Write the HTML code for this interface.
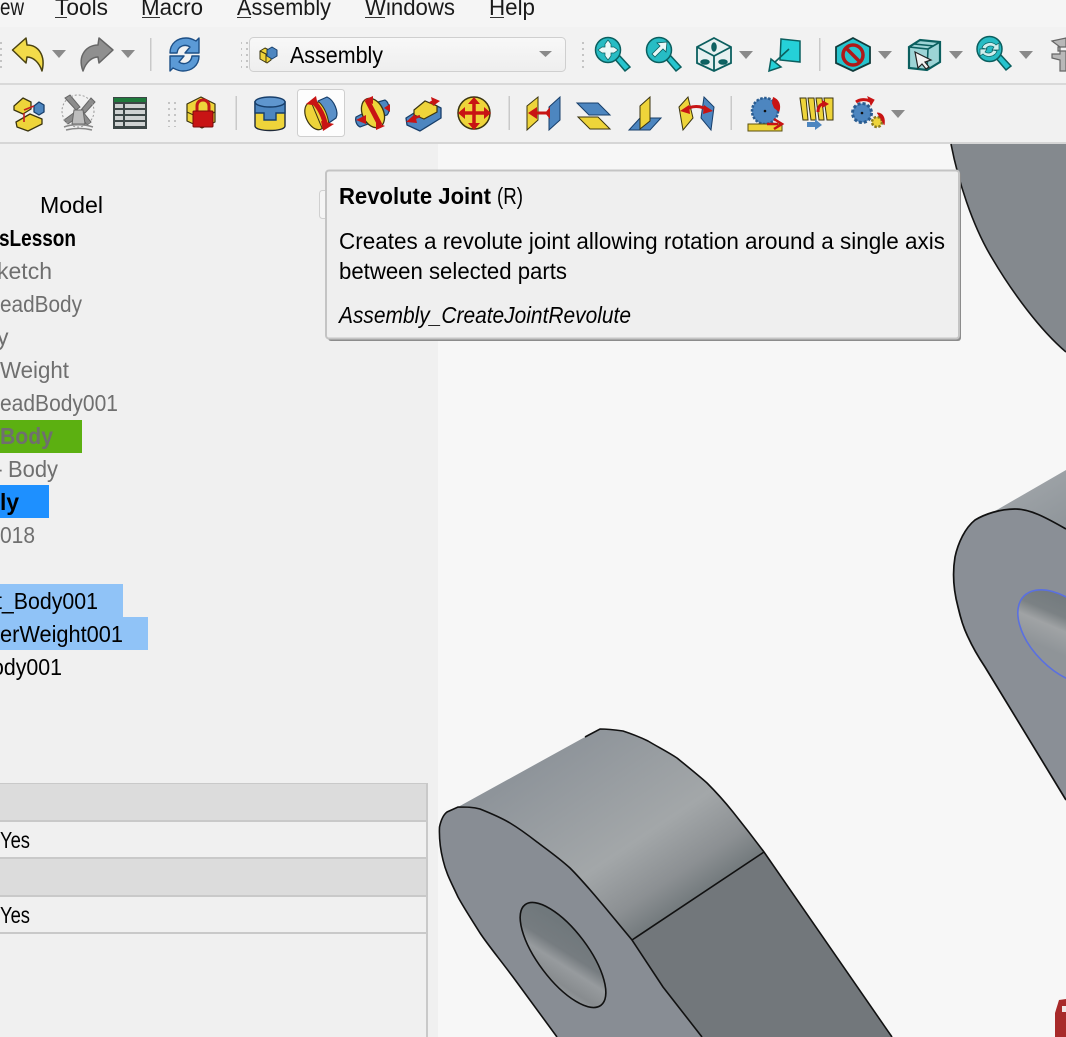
<!DOCTYPE html>
<html><head><meta charset="utf-8"><title>Revolute Joint</title>
<style>
html,body{margin:0;padding:0;width:1066px;height:1037px;overflow:hidden;background:#f0f0f0}
svg{display:block}
text{font-family:"Liberation Sans",sans-serif;font-size:23px;fill:#000}
.m{font-size:23px;fill:#1a1a1a}
.g{fill:#6f6f6f}
.b{font-weight:bold}
</style></head><body>
<svg width="1066" height="1037" viewBox="0 0 1066 1037" xmlns="http://www.w3.org/2000/svg">
<defs>
<linearGradient id="top1" gradientUnits="userSpaceOnUse" x1="587" y1="730" x2="698" y2="896"><stop offset="0" stop-color="#8e949a"/><stop offset=".6" stop-color="#a3a7a9"/><stop offset=".85" stop-color="#8c9093"/><stop offset="1" stop-color="#737a7d"/></linearGradient>
<linearGradient id="hole1" gradientUnits="userSpaceOnUse" x1="542" y1="922" x2="572" y2="1002"><stop offset="0" stop-color="#6d767a"/><stop offset=".4" stop-color="#767c80"/><stop offset=".55" stop-color="#979b9e"/><stop offset=".75" stop-color="#888c8f"/><stop offset="1" stop-color="#a8aeb2"/></linearGradient>
<linearGradient id="top2" gradientUnits="userSpaceOnUse" x1="1020" y1="480" x2="1050" y2="530"><stop offset="0" stop-color="#a0a5a9"/><stop offset="1" stop-color="#90969b"/></linearGradient>
<linearGradient id="hole2" gradientUnits="userSpaceOnUse" x1="1032" y1="600" x2="1056" y2="660"><stop offset="0" stop-color="#6f777b"/><stop offset=".45" stop-color="#7b8184"/><stop offset=".65" stop-color="#a0a3a5"/><stop offset="1" stop-color="#8f9498"/></linearGradient>
<linearGradient id="cb" x1="0" y1="0" x2="0" y2="1"><stop offset="0" stop-color="#f8f8f8"/><stop offset="1" stop-color="#eeeeee"/></linearGradient>
<pattern id="grip" width="6" height="6" patternUnits="userSpaceOnUse"><rect width="2" height="2" fill="#c4c4c4"/></pattern>
</defs>

<!-- chrome -->
<rect width="1066" height="1037" fill="#f0f0f0"/>
<rect x="0" y="0" width="1066" height="27" fill="#f5f5f5"/>
<rect x="0" y="27" width="1066" height="56" fill="#f2f2f2"/>
<rect x="0" y="83" width="1066" height="2" fill="#d9d9d9"/>
<rect x="0" y="85" width="1066" height="57" fill="#f1f1f1"/>
<rect x="0" y="142" width="1066" height="2" fill="#d6d6d6"/>

<!-- viewport -->
<rect x="438" y="144" width="628" height="893" fill="#f7f7f7"/>

<!-- part top right -->
<path d="M951 144 C958 180 972 225 992 258 C1012 292 1040 330 1066 352 L1066 144Z" fill="#84898e"/>
<path d="M951 144 C958 180 972 225 992 258 C1012 292 1040 330 1066 352" fill="none" stroke="#151515" stroke-width="1.600"/>

<!-- part right -->
<path d="M995 511 L1066 470 L1066 530Z" fill="url(#top2)"/>
<path d="M1066 529 L1040 515 L1015 509 L995 511 L975 520 L962 535 L955 557 L953 577 L958 607 L968 637 L985 667 L1066 800 Z" fill="#8a8f96"/>
<path d="M1066 529 C1045 517 1030 509 1015 509 C1000 509 985 514 975 520 C965 528 958 543 955 557 C952 575 954 592 958 607 C961 620 964 629 968 637 C973 648 979 658 985 667 L1066 800" fill="none" stroke="#111" stroke-width="1.700"/>
<ellipse cx="1065" cy="637" rx="58" ry="33" transform="rotate(45 1065 637)" fill="url(#hole2)" stroke="#5a70e0" stroke-width="1.600"/>

<!-- part bottom -->
<path d="M620 930 L764 852 L892 1037 L650 1037 Z" fill="#72777b"/>
<path d="M458 807 L585 737 L600 729 L623 731 L648 741 L677 758 L707 783 L733 812 L764 852 L632 940 L603 905 L570 868 L537 842 L510 823 L480 809Z" fill="url(#top1)"/>
<path d="M439.500 827 C441 820 443 815 447 812 L458 807 C466 807 473 807 480 809 C490 813 500 817 510 823 C520 829 528 835 537 842 C549 851 559 858 570 868 C582 880 592 892 603 905 L632 940 L663 987 L702 1037 L557 1037 L513 977 C498 957 488 945 480 933 C470 917 464 908 458 897 C451 882 446 873 443 860 C440 848 439 838 439.500 827Z" fill="#888d94"/>
<path d="M557 1037 L513 977 C498 957 488 945 480 933 C470 917 464 908 458 897 C451 882 446 873 443 860 C440 848 439 838 439.500 827 C441 820 443 815 447 812 L458 807 C466 807 473 807 480 809 C490 813 500 817 510 823 C520 829 528 835 537 842 C549 851 559 858 570 868 C582 880 592 892 603 905 L632 940 L663 987 L702 1037" fill="none" stroke="#111" stroke-width="1.600"/>
<path d="M585 737 L600 729 C608 729 616 730 623 731 C632 734 640 737 648 741 C658 747 668 752 677 758 C688 767 698 775 707 783 C716 792 725 802 733 812 C745 827 755 840 764 852 L892 1037" fill="none" stroke="#111" stroke-width="1.600"/>
<path d="M764 852 L632 940" fill="none" stroke="#111" stroke-width="1.600"/>
<ellipse cx="563" cy="955" rx="63" ry="25" transform="rotate(53 563 955)" fill="url(#hole1)" stroke="#111" stroke-width="1.600"/>

<!-- red thing -->
<path d="M1055 1013 L1059 1000 L1066 999 L1066 1037 L1055 1037Z" fill="#a82a2a"/>
<rect x="1062" y="1006" width="4" height="6" fill="#f0e8e8"/>

<!-- Menu text -->
<text class="m" x="0" y="15" textLength="24" lengthAdjust="spacingAndGlyphs">ew</text>
<text class="m" x="55" y="15" textLength="53" lengthAdjust="spacingAndGlyphs">Tools</text>
<text class="m" x="141" y="15" textLength="62" lengthAdjust="spacingAndGlyphs">Macro</text>
<text class="m" x="237" y="15" textLength="94" lengthAdjust="spacingAndGlyphs">Assembly</text>
<text class="m" x="365" y="15" textLength="90" lengthAdjust="spacingAndGlyphs">Windows</text>
<text class="m" x="489" y="15" textLength="46" lengthAdjust="spacingAndGlyphs">Help</text>
<g fill="#333"><rect x="55" y="17" width="12" height="1"/><rect x="142" y="17" width="18" height="1"/><rect x="237" y="17" width="14" height="1"/><rect x="365" y="17" width="20" height="1"/><rect x="490" y="17" width="14" height="1"/></g>

<!-- Row 1 -->
<rect x="0" y="42" width="2" height="26" fill="url(#grip)"/>
<path d="M12.500 50 L26 38 L27 45 C38 45 46 55 42 71 C39 62 33 57 27 57 L26 63 Z" fill="#f2db4a" stroke="#4a4210" stroke-width="1.500" stroke-linejoin="round"/>
<polygon points="52,50 66,50 59,58" fill="#8a8a8a"/>
<path d="M113 50 L99 38 L98 45 C87 45 77 55 83 71 C86 62 92 57 98 57 L99 63 Z" fill="#8f8f8f" stroke="#666" stroke-width="1.500" stroke-linejoin="round"/>
<polygon points="121,50 135,50 128,58" fill="#8a8a8a"/>
<rect x="150" y="38" width="1.500" height="33" fill="#c9c9c9"/>
<!-- refresh -->
<path d="M170 53 C170 43 178 38 186 38 C191 38 194 40 196 41 L199 38 L199 53 L185 53 L190 47 C186 44 178 45 177 53Z" fill="#5b9ad6" stroke="#1d4f86" stroke-width="1.400" stroke-linejoin="round"/>
<path d="M199 56 C199 66 191 71 183 71 C178 71 175 69 173 68 L170 71 L170 56 L184 56 L179 62 C183 65 191 64 192 56Z" fill="#5b9ad6" stroke="#1d4f86" stroke-width="1.400" stroke-linejoin="round"/>
<rect x="241" y="42" width="8" height="26" fill="url(#grip)"/>
<!-- combo -->
<rect x="249.500" y="37.500" width="316" height="34" rx="4" fill="url(#cb)" stroke="#cfcfcf"/>
<g transform="translate(259,45)" stroke="#3a3410" stroke-width="1" stroke-linejoin="round">
<path d="M1 6 L6 3 L12 6 L12 15 L8 18 L1 14Z" fill="#eed43a"/><path d="M8 5 L13 2 L18 5 L18 11 L13 14 L8 11Z" fill="#4d86c0" stroke="#173e6a"/><path d="M1 6 L7 9 L7 18" fill="none"/>
</g>
<text x="290" y="63" textLength="93" lengthAdjust="spacingAndGlyphs" fill="#111">Assembly</text>
<polygon points="539,51 552,51 545.500,57" fill="#8a8a8a"/>
<rect x="578" y="42" width="8" height="26" fill="url(#grip)"/>

<!-- zoom fit -->
<g stroke="#0b5f5f" stroke-width="1.500">
<path d="M614 58 L625 71 L630 67 L618 54Z" fill="#27c4ce"/>
<circle cx="608" cy="50" r="12.500" fill="#27bcc4"/>
<path d="M608 40 L611 44 L611 47 L614 47 L618 50 L614 53 L611 53 L611 56 L608 60 L605 56 L605 53 L602 53 L598 50 L602 47 L605 47 L605 44Z" fill="#eaf8f8" stroke="#0b5f5f" stroke-width=".7"/>
<path d="M665 58 L676 71 L681 67 L669 54Z" fill="#27c4ce"/>
<circle cx="659" cy="50" r="12.500" fill="#27bcc4"/>
<path d="M667 42 L666 52 L663 49 L655 57 L652 54 L660 46 L657 43Z" fill="#eaf8f8" stroke-width=".8"/>
<!-- cube -->
<path d="M714 38 L731 47 L731 63 L714 71 L697 63 L697 47Z" fill="#e7f1f1" stroke-width="1.800"/>
<path d="M697 47 L714 56 L731 47 M714 56 L714 71" fill="none" stroke-width="1.800"/>
<ellipse cx="714" cy="47" rx="2" ry="4" fill="#0f6464"/><ellipse cx="705" cy="62" rx="4" ry="2" fill="#0f6464"/><ellipse cx="723" cy="62" rx="4" ry="2" fill="#0f6464"/>
<!-- kite -->
<path d="M781 39 L800 41 L800 62 L780 60Z" fill="#25d0d8"/>
<path d="M789 49 L775 62" fill="none" stroke-width="1.600"/>
<path d="M769 71 L771 59 L781 67Z" fill="#25d0d8"/>
<!-- no draw -->
<path d="M853 38 L870 47 L870 63 L853 71 L836 63 L836 47Z" fill="#27c4ce" stroke="#123c3c" stroke-width="1.800"/>
<circle cx="853" cy="55" r="10" fill="#27c4ce" stroke="#b01818" stroke-width="3.500"/>
<path d="M846 48 L860 62" stroke="#b01818" stroke-width="3.500"/>
<!-- sel cube -->
<path d="M909 47 L920 40 L940 42 L940 62 L927 70 L909 68Z" fill="#9dd4d6" stroke-width="2.200"/>
<path d="M909 47 L928 49 L940 42 M928 49 L927 70 M914 44 L934 46" fill="none" stroke-width="1.600"/>
<path d="M915 52 L931 60 L925 62 L929 67 L926 69 L922 64 L918 68Z" fill="#f1f1f1" stroke="#222" stroke-width="1.200"/>
<!-- zoom refresh -->
<path d="M995 57 L1006 70 L1011 66 L999 53Z" fill="#27c4ce"/>
<circle cx="989.500" cy="49" r="12.500" fill="#27bcc4"/>
<path d="M982 48 C984 42 992 41 996 45 L999 43 L999 50 L992 50 L994 47 C991 45 987 46 986 49Z" fill="#cfeeee" stroke-width=".7"/>
<path d="M997 51 C995 57 987 58 983 54 L980 56 L980 49 L987 49 L985 52 C988 54 992 53 993 50Z" fill="#cfeeee" stroke-width=".7"/>
</g>
<polygon points="739,51 753,51 746,59" fill="#8a8a8a"/>
<rect x="819" y="38" width="1.500" height="33" fill="#c9c9c9"/>
<polygon points="878,51 892,51 885,59" fill="#8a8a8a"/>
<polygon points="949,51 963,51 956,59" fill="#8a8a8a"/>
<polygon points="1019,51 1033,51 1026,59" fill="#8a8a8a"/>
<!-- caliper -->
<path d="M1052 41 L1066 38 L1066 47 L1058 47 L1058 51 L1066 51 L1066 71 L1060 71 L1060 60 L1052 58 L1052 54 L1060 54 L1060 47 Z" fill="#b8b8b8" stroke="#666" stroke-width="1.200"/>

<!-- Row 2 -->
<rect x="297.500" y="89.500" width="47" height="47" rx="3" fill="#fdfdfd" stroke="#cfcfcf"/>
<g stroke="#3a3410" stroke-width="1.300" stroke-linejoin="round">
<path d="M14 106 L23 98 L31 102 L31 109 L23 114 L14 110Z" fill="#eed43a"/>
<path d="M16 122 L30 114 L42 119 L42 124 L28 131 L17 127Z" fill="#eed43a"/>
<path d="M34 106 L39 102 L44 105 L44 112 L39 115 L34 112Z" fill="#4d86c0" stroke="#173e6a"/>
</g>
<path d="M24 110 L34 106 M24 113 L24 122" stroke="#c42020" stroke-width="1.600" fill="none"/>
<!-- windmill -->
<g stroke="#666" fill="#8c8c8c" stroke-width="1">
<path d="M76 110 L65 98 L70 95 L80 107Z"/><path d="M81 110 L91 98 L95 102 L85 113Z"/><path d="M75 112 L64 120 L68 124 L79 116Z"/><path d="M83 112 L91 122 L87 125 L80 115Z"/>
<path d="M74 110 L83 110 L85 124 L72 124Z" fill="#bdbdbd"/>
</g>
<circle cx="78" cy="111" r="16" fill="none" stroke="#999" stroke-width="1" stroke-dasharray="2 2"/>
<path d="M64 127 C72 124 84 124 93 127 M66 130 C74 128 84 128 92 130" fill="none" stroke="#888" stroke-width="1.500"/>
<!-- sheet -->
<rect x="113" y="97" width="34" height="32" fill="#3c4646"/>
<rect x="114" y="98" width="32" height="4" fill="#1f7a3c"/>
<g fill="#cfd2d2"><rect x="115" y="104" width="8" height="4"/><rect x="125" y="104" width="20" height="4"/><rect x="115" y="110" width="8" height="4"/><rect x="125" y="110" width="20" height="4"/><rect x="115" y="116" width="8" height="4"/><rect x="125" y="116" width="20" height="4"/><rect x="115" y="122" width="8" height="4"/><rect x="125" y="122" width="20" height="4"/></g>
<rect x="168" y="101" width="8" height="26" fill="url(#grip)"/>
<!-- lock -->
<path d="M187 104 L201 97 L215 104 L215 122 L202 128 L187 121Z" fill="#eed43a" stroke="#3a3410" stroke-width="1.200" stroke-linejoin="round"/>
<path d="M187 112 L202 119 L215 112" fill="none" stroke="#3a3410" stroke-width="1"/>
<path d="M197 111 L197 106 C197 98 209 98 209 106 L209 111" fill="none" stroke="#c01818" stroke-width="3"/>
<rect x="193" y="111" width="20" height="16" rx="1" fill="#c81414" stroke="#7a0b0b"/>
<rect x="235.500" y="96" width="1.500" height="34" fill="#c9c9c9"/>
<!-- cylinder -->
<path d="M255 102 L255 126 C255 132 285 132 285 126 L285 102Z" fill="#eed43a" stroke="#1f2a3a" stroke-width="1.400"/>
<path d="M255 102 L255 113 L264 113 L264 120 L276 120 L276 113 L285 113 L285 102Z" fill="#4d86c0" stroke="#173e6a" stroke-width="1.400"/>
<ellipse cx="270" cy="102" rx="15" ry="5" fill="#5f96ce" stroke="#173e6a" stroke-width="1.400"/>
<!-- revolute -->
<path d="M318 101 L327 97 C334 100 339 112 336 118 L326 125 Z" fill="#5a90c8" stroke="#173e6a" stroke-width="1.200" stroke-linejoin="round"/>
<ellipse cx="315" cy="116" rx="9" ry="14.500" transform="rotate(-25 315 116)" fill="#eed43a" stroke="#3a3410" stroke-width="1.200"/>
<path d="M319 102 C325 108 328 116 329 125 L322 128 L312 104Z" fill="#eed43a" stroke="#3a3410" stroke-width="1"/>
<path d="M313 101 C320 108 324 116 326 127" stroke="#c81414" stroke-width="5" fill="none"/>
<path d="M306 104 L316 96 L318 106Z M334 124 L323 131 L321 121Z" fill="#c81414"/>
<!-- cylindrical -->
<g stroke="#173e6a" stroke-width="1.200"><path d="M378 102 L385 100 C390 103 390 112 387 115 L380 117Z" fill="#4d86c0"/><path d="M356 117 L364 113 L368 124 L360 127 C356 125 355 120 356 117Z" fill="#4d86c0"/></g>
<ellipse cx="373" cy="113" rx="10.500" ry="15.500" transform="rotate(-25 373 113)" fill="#eed43a" stroke="#3a3410" stroke-width="1.300"/>
<path d="M367 100 L380 125" stroke="#c81414" stroke-width="5"/>
<path d="M364 100 L373 96 L373 104Z M385 126 L376 130 L376 122Z M384 108 L390 104 L390 112Z M356 120 L366 115 L366 124Z" fill="#c81414"/>
<!-- slider -->
<path d="M406 118 L414 113 L420 117 L434 108 L433 104 L441 108 L441 118 L420 131 L407 125Z" fill="#4d86c0" stroke="#173e6a" stroke-width="1.300" stroke-linejoin="round"/>
<path d="M414 110 L425 101 L437 106 L437 112 L424 119 L414 115Z" fill="#eed43a" stroke="#3a3410" stroke-width="1.200"/>
<path d="M430 103 L436 100 M410 120 L420 116" stroke="#c81414" stroke-width="2.500"/>
<path d="M440 101 L431 97 L433 106Z M406 122 L415 114 L417 123Z" fill="#c81414"/>
<!-- ball -->
<circle cx="474" cy="113" r="16" fill="#eed43a" stroke="#3a3410" stroke-width="1.500"/>
<path d="M460 113 L488 113 M474 100 L474 126" stroke="#c81414" stroke-width="3.500"/>
<path d="M458 113 L465 107 L465 119Z M491 113 L484 107 L484 119Z M474 97 L468 104 L480 104Z M474 130 L468 123 L480 123Z" fill="#c81414"/>
<rect x="508.500" y="96" width="1.500" height="34" fill="#c9c9c9"/>
<!-- distance -->
<path d="M527 106 L538 97 L538 120 L527 130Z" fill="#eed43a" stroke="#3a3410" stroke-width="1"/>
<path d="M549 107 L560 97 L560 120 L549 130Z" fill="#4d86c0" stroke="#173e6a" stroke-width="1"/>
<path d="M531 113 L550 113" stroke="#c81414" stroke-width="3"/>
<path d="M528 113 L537 107 L537 119Z M550 107 L550 119 L545 113Z" fill="#c81414"/>
<!-- parallel -->
<path d="M577 103 L598 103 L610 115 L589 115Z" fill="#4d86c0" stroke="#173e6a" stroke-width="1"/>
<path d="M578 117 L598 117 L610 129 L590 129Z" fill="#eed43a" stroke="#3a3410" stroke-width="1"/>
<!-- perpendicular -->
<path d="M640 118 L661 118 L650 130 L629 130Z" fill="#4d86c0" stroke="#173e6a" stroke-width="1"/>
<path d="M640 106 L650 97 L650 121 L640 129Z" fill="#eed43a" stroke="#3a3410" stroke-width="1"/>
<!-- angle -->
<path d="M679 107 L688 97 L693 118 L683 130Z" fill="#eed43a" stroke="#3a3410" stroke-width="1"/>
<path d="M704 97 L714 107 L711 130 L701 118Z" fill="#4d86c0" stroke="#173e6a" stroke-width="1"/>
<path d="M685 111 C690 105 702 105 708 111" fill="none" stroke="#c81414" stroke-width="3"/>
<path d="M680 111 L689 105 L690 114Z M713 111 L704 105 L703 114Z" fill="#c81414"/>
<rect x="730.500" y="96" width="1.500" height="34" fill="#c9c9c9"/>
<!-- rack -->
<circle cx="765" cy="111" r="13" fill="#4d86c0" stroke="#2a5c90" stroke-width="2.500" stroke-dasharray="2.500 1.500"/>
<circle cx="765" cy="111" r="1.300" fill="#111"/>
<path d="M773 97 C781 100 781 108 779 112 L774 108 L772 103Z" fill="#c81414"/>
<path d="M748 124 L782 124 L782 131 L748 131Z" fill="#eed43a" stroke="#5a5010" stroke-width="1"/>
<path d="M767 124 L778 124 M774 119 L782 124 L774 129" stroke="#c81414" stroke-width="2.500" fill="none"/>
<!-- screw -->
<path d="M800 98 L806 98 L808 120 L803 120Z M808 98 L814 98 L816 120 L811 120Z M816 98 L822 98 L824 120 L819 120Z M824 98 L833 98 L833 120 L827 120Z" fill="#eed43a" stroke="#3a3410" stroke-width="1"/>
<path d="M818 112 C818 106 821 104 824 104" stroke="#c81414" stroke-width="3" fill="none"/>
<path d="M822 100 L829 104 L822 108Z" fill="#c81414"/>
<path d="M807 122 L815 122 L815 119 L822 125 L815 130 L815 127 L807 127Z" fill="#4d86c0"/>
<!-- gears -->
<circle cx="862" cy="113" r="9.500" fill="#4d86c0" stroke="#2a5c90" stroke-width="3" stroke-dasharray="3 2"/>
<circle cx="862" cy="113" r="1.300" fill="#111"/>
<circle cx="877" cy="122" r="5" fill="#eed43a" stroke="#8a7a20" stroke-width="2.500" stroke-dasharray="2.500 1.500"/>
<path d="M856 102 C860 99 866 99 870 101" stroke="#c81414" stroke-width="3" fill="none"/>
<path d="M868 97 L871 105 L874 100Z M877 113 C884 113 885 120 884 125" stroke="#c81414" fill="#c81414"/>
<polygon points="891,110 905,110 898,118" fill="#8a8a8a"/>

<!-- Tree -->
<rect x="0" y="420" width="82" height="33" fill="#5cb011"/>
<rect x="0" y="485" width="49" height="33" fill="#1e90ff"/>
<rect x="0" y="584" width="123" height="33" fill="#90c3f7"/>
<rect x="0" y="617" width="148" height="33" fill="#90c3f7"/>
<text x="40" y="213" textLength="63" lengthAdjust="spacingAndGlyphs" fill="#111">Model</text>
<text class="b" x="-1" y="246" textLength="77" lengthAdjust="spacingAndGlyphs">sLesson</text>
<text class="g" x="-3" y="279" textLength="55" lengthAdjust="spacingAndGlyphs">ketch</text>
<text class="g" x="0" y="312" textLength="82" lengthAdjust="spacingAndGlyphs">eadBody</text>
<text class="g" x="-3" y="345">y</text>
<text class="g" x="0" y="378" textLength="69" lengthAdjust="spacingAndGlyphs">Weight</text>
<text class="g" x="0" y="411" textLength="118" lengthAdjust="spacingAndGlyphs">eadBody001</text>
<text class="g b" x="0" y="444" textLength="53" lengthAdjust="spacingAndGlyphs">Body</text>
<text class="g" x="-5" y="477">-</text>
<text class="g" x="8" y="477" textLength="50" lengthAdjust="spacingAndGlyphs">Body</text>
<text class="b" x="0" y="510" textLength="19" lengthAdjust="spacingAndGlyphs">ly</text>
<text class="g" x="0" y="543" textLength="35" lengthAdjust="spacingAndGlyphs">018</text>
<text x="-4" y="609" textLength="102" lengthAdjust="spacingAndGlyphs">t_Body001</text>
<text x="0" y="642" textLength="123" lengthAdjust="spacingAndGlyphs">erWeight001</text>
<text x="-8" y="675" textLength="70" lengthAdjust="spacingAndGlyphs">ody001</text>

<!-- property table -->
<rect x="0" y="783" width="427" height="38" fill="#dcdcdc"/>
<rect x="0" y="859" width="427" height="37" fill="#dcdcdc"/>
<g fill="#c9c9c9"><rect x="0" y="783" width="428" height="1"/><rect x="0" y="820" width="427" height="2"/><rect x="0" y="857" width="427" height="2"/><rect x="0" y="895" width="427" height="2"/><rect x="0" y="932" width="427" height="2"/><rect x="426" y="783" width="2" height="254"/></g>
<text x="0" y="848" textLength="30" lengthAdjust="spacingAndGlyphs">Yes</text>
<text x="0" y="923" textLength="30" lengthAdjust="spacingAndGlyphs">Yes</text>

<!-- hidden button behind tooltip -->
<rect x="319.500" y="190.500" width="12" height="28" rx="3" fill="#f5f5f5" stroke="#d0d0d0"/>

<!-- tooltip -->
<rect x="328" y="172" width="633" height="169" rx="3" fill="#8c8c8c"/>
<rect x="326" y="170.500" width="633" height="168" rx="3" fill="#efefef" stroke="#c4c4c4" stroke-width="2"/>
<text class="b" x="339" y="204" textLength="152" lengthAdjust="spacingAndGlyphs">Revolute Joint</text>
<text x="497" y="204" textLength="26" lengthAdjust="spacingAndGlyphs" fill="#222">(R)</text>
<text x="339" y="249" textLength="606" lengthAdjust="spacingAndGlyphs" fill="#111">Creates a revolute joint allowing rotation around a single axis</text>
<text x="339" y="279" textLength="228" lengthAdjust="spacingAndGlyphs" fill="#111">between selected parts</text>
<text x="339" y="323" textLength="292" lengthAdjust="spacingAndGlyphs" font-style="italic" fill="#111">Assembly_CreateJointRevolute</text>
</svg>
</body></html>
